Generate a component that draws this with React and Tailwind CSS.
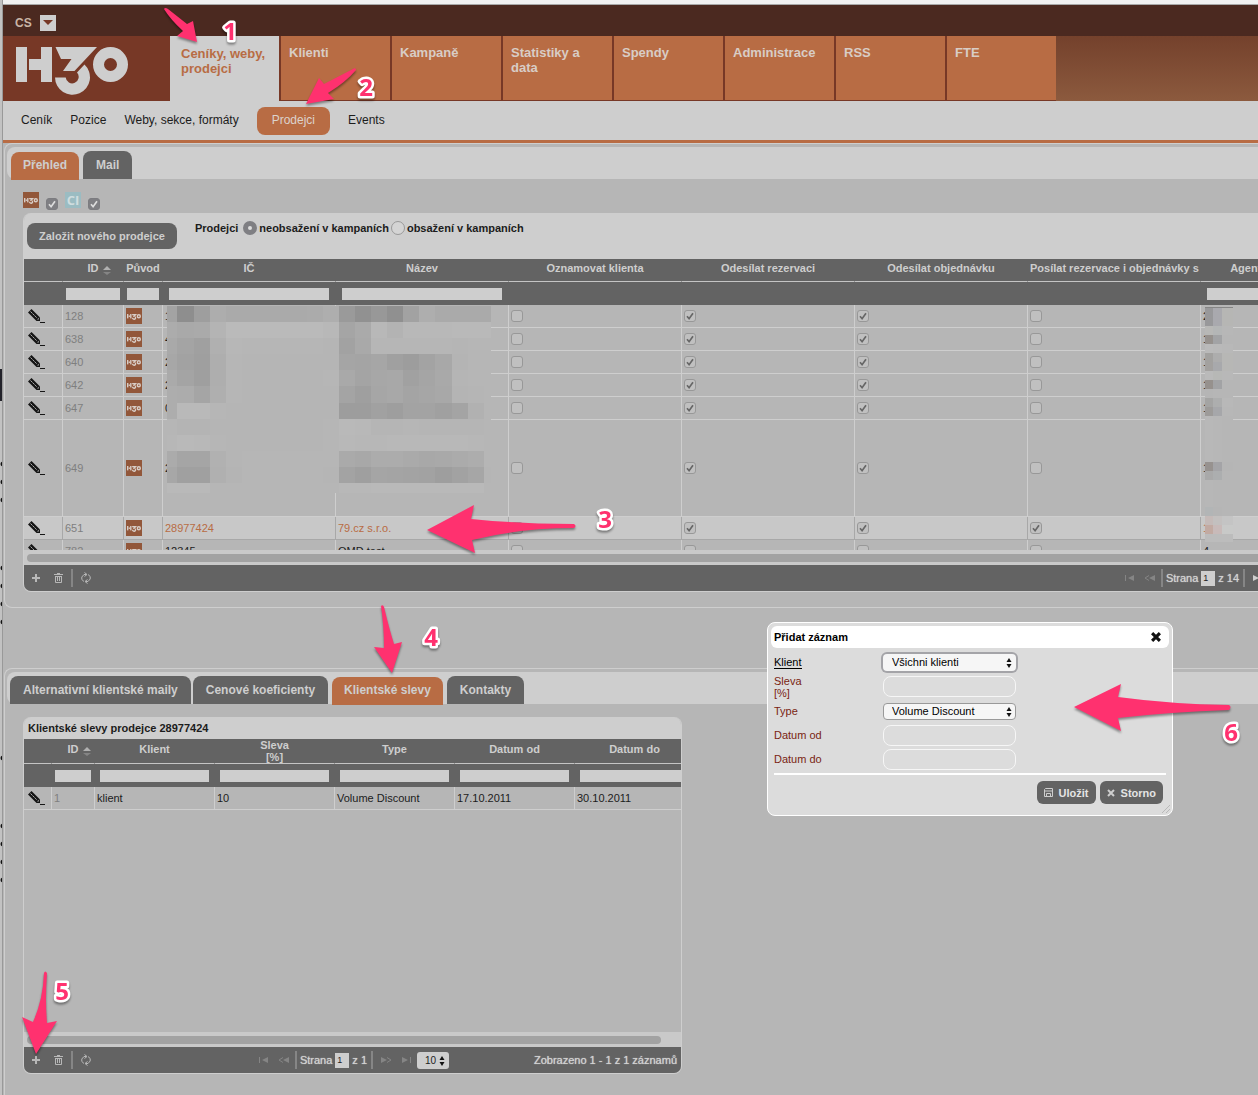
import React, { useState } from 'react';

const mainTabs = ['Klienti', 'Kampaně', 'Statistiky a data', 'Spendy', 'Administrace', 'RSS', 'FTE'];

const sellerColumns = [
  { label: '', width: 39 },
  { label: 'ID', width: 61, sorted: true, filter: 'px-[3px]' },
  { label: 'Původ', width: 39, filter: 'px-[3px]' },
  { label: 'IČ', width: 173, filter: 'px-1.5' },
  { label: 'Název', width: 173, filter: 'px-1.5' },
  { label: 'Oznamovat klienta', width: 173 },
  { label: 'Odesílat rezervaci', width: 173 },
  { label: 'Odesílat objednávku', width: 173 },
  { label: 'Posílat rezervace i objednávky s', width: 173 },
  { label: 'Agenturní provize [%]', width: 173, filter: 'px-1.5' },
  { label: '', width: 1046 },
];

const sellers = [
  { id: 128, ic: '1', name: '', flags: [false, true, true, false], fee: '2' },
  { id: 638, ic: '4', name: '', flags: [false, true, true, false], fee: '1' },
  { id: 640, ic: '2', name: '', flags: [false, true, true, false], fee: '1' },
  { id: 642, ic: '2', name: '', flags: [false, true, true, false], fee: '1' },
  { id: 647, ic: '0', name: '', flags: [false, true, true, false], fee: '1' },
  { id: 649, ic: '2', name: '', flags: [false, true, true, false], fee: '1', tall: true },
  { id: 651, ic: '28977424', name: '79.cz s.r.o.', flags: [false, true, true, true], fee: '1', selected: true },
  { id: 782, ic: '12345', name: 'OMD test', flags: [false, false, false, false], fee: '4' },
];

const discountColumns = [
  { label: '', width: 28 },
  { label: 'ID', width: 43, sorted: true, filter: 'px-[3px]' },
  { label: 'Klient', width: 120, filter: 'px-[5px]' },
  { label: 'Sleva [%]', width: 120, filter: 'px-[5px]', wrap: true },
  { label: 'Type', width: 120, filter: 'px-[5px]' },
  { label: 'Datum od', width: 120, filter: 'px-[5px]' },
  { label: 'Datum do', width: 120, filter: 'px-[5px]' },
];

// Anonymised values, one gray level per block
const maskX = [0, 10, 27, 43, 59, 75, 91, 107, 123, 140, 156, 172, 188, 204, 220, 236, 252, 268, 285, 301, 317, 324];
const maskY = [0, 16, 32, 48, 64, 80, 97, 113, 129, 145, 161, 177, 187];
const maskRows = [
  'a3 8e 9e ad aa aa aa aa aa ab ae 9a 91 98 90 a2 ae aa aa aa aa',
  'ac a9 aa b4 ba ba ba ba ba ba b8 a5 aa b8 b3 b8 b8 b8 b9 b9 b9',
  'a9 a4 a0 b0 b7 b6 b6 b6 b6 b6 b5 a2 a9 b6 b6 b6 b6 b6 b5 b6 b6',
  'a7 a2 9f ae b6 b5 b5 b5 b5 b5 b5 a5 a4 a6 a0 9d a3 a8 b4 b6 b6',
  'aa a4 9f ae b6 b5 b5 b5 b5 b5 b6 a9 a4 a7 a8 a1 a5 a9 b5 b6 b6',
  'ad ac a5 af b6 b5 b5 b5 b5 b5 b5 a4 9f a6 a8 a4 a6 a8 b4 b5 b6',
  'ad b9 b9 b6 b5 b5 b5 b5 b5 b5 b5 9d 9d a1 9e a3 a3 a0 a4 b1 b6',
  'b6 b4 b4 b5 b5 b5 b5 b5 b5 b5 b6 b9 b8 b5 b5 b6 b5 b5 b5 b5 b6',
  'b7 b9 b8 b6 b5 b5 b5 b5 b5 b5 b6 b8 b7 b7 b8 b8 b8 b8 b8 b7 b6',
  'ab a5 a5 b1 b5 b6 b6 b6 b6 b6 b6 aa a8 ac ac aa a8 a9 ab ad b6',
  'a7 a0 a0 b0 b4 b6 b6 b6 b6 b6 b5 a3 9f a5 a4 a3 a2 9e a2 a6 b5',
  'b9 b9 b9 b6 b6 b6 b6 b6 b6 b6 b6 b8 b8 b9 b9 b9 b9 b9 b9 b9 b6',
];

const feeBlocks = [
  [0, 19, '#98989a', '#a9a9ae', '#b6b6b4'],
  [19, 9, '#b8b8b6', '#b4b6b6', '#b7b7b7'],
  [28, 9, '#96918d', '#a2a3a5', '#b6b6b6'],
  [37, 9, '#bababa', '#b9b9b9', '#b8b8b8'],
  [46, 9, '#a2a19f', '#adadad', '#b7b7b5'],
  [55, 9, '#a3a19f', '#a8a9ac', '#b7b7b5'],
  [64, 9, '#bababa', '#b7b8b6', '#b8b8b8'],
  [73, 9, '#96918d', '#a2a3a5', '#b6b6b6'],
  [82, 9, '#b5b5b5', '#b6b6b6', '#b6b6b6'],
  [91, 9, '#a4a4a3', '#adaeae', '#b8b8b8'],
  [100, 9, '#9d9b99', '#a6a7aa', '#b7b7b7'],
  [109, 46, '#b8b8b8', '#b7b7b7', '#b6b6b6'],
  [155, 9, '#97928f', '#a4a4a7', '#b5b5b5'],
  [164, 9, '#a9a9a9', '#acaeaf', '#b6b6b6'],
  [173, 27, '#b7b7b7', '#b6b6b6', '#b6b6b6'],
  [200, 9, '#b2b5b6', '#b5b5b5', '#b6b6b6'],
  [209, 9, '#c5bab8', '#c3c0bf', '#c4c4c4'],
  [218, 9, '#c2aaa2', '#c8bab9', '#c8c9c8'],
  [227, 8, '#bcbcbc', '#bcbcbc', '#bcbcbc'],
];

const H3OMark = ({ className }) => (
  <svg viewBox="0 0 112 48" fill="none" className={className} aria-label="H3O" role="img">
    <g fill="currentColor">
      <rect x="0" y="0" width="11" height="35" />
      <rect x="13" y="12" width="13" height="11" />
      <rect x="25" y="0" width="11" height="35" />
      <path d="M39.500 0H81L58.500 24L47 24L55.500 12H45Z" />
      <path d="M39 30.500A17.500 17.500 0 1 0 68.500 17.500L61 25.500A6.500 6.500 0 1 1 49.700 30.500Z" />
      <path fillRule="evenodd" d="M94.500 0a17.500 17.500 0 1 0 0 35a17.500 17.500 0 1 0 0-35ZM94.500 11a6.500 6.500 0 1 1 0 13a6.500 6.500 0 1 1 0-13Z" />
    </g>
  </svg>
);

const H3OBadge = () => (
  <span className="flex h-4 w-4 items-center justify-center bg-[#92573a] text-[#d8cdc6]">
    <H3OMark className="mt-px w-3.5" />
  </span>
);

const Pencil = () => (
  <svg width="17" height="14" viewBox="0 0 17 14">
    <path d="M3.500 0L12 8.500V12H8.500L0 3.500Z" fill="#161616" />
    <path d="M2.500 2.500L9 9" stroke="#b6b6b6" strokeWidth="1" strokeDasharray="2 0.800" />
    <path d="M9 10.500L10.800 8.700V10.500Z" fill="#b6b6b6" />
    <rect x="12" y="13" width="5" height="1" fill="#161616" />
  </svg>
);

const Tick = ({ label, checked, strong }) => (
  <span className="relative block h-3 w-3">
    <input
      type="checkbox"
      aria-label={label}
      defaultChecked={checked}
      className={`block h-3 w-3 appearance-none rounded-[3px] border ${strong ? 'border-[#7c7c80] bg-[#7f7f83]' : 'border-[#989898] bg-[#c0c0c0]'}`}
    />
    {checked && (
      <svg viewBox="0 0 12 12" className={`pointer-events-none absolute inset-0 ${strong ? 'text-[#dedede]' : 'text-[#666666]'}`}>
        <path d="M3 6.200L5.100 8.700L9 3.300" fill="none" stroke="currentColor" strokeWidth="1.700" />
      </svg>
    )}
  </span>
);

const SortIcon = () => (
  <svg width="8" height="10" viewBox="0 0 8 10" className="absolute left-full top-1 ml-1">
    <path d="M0 4L4 0L8 4Z" fill="#b0b0b0" />
    <path d="M0 6H8L4 9Z" fill="#858585" />
  </svg>
);

const Stepper = ({ className }) => (
  <svg width="6" height="10" viewBox="0 0 6 10" className={`pointer-events-none absolute ${className}`}>
    <path d="M0.500 4L3 0L5.500 4ZM0.500 6H5.500L3 10Z" fill="#111111" />
  </svg>
);

const GridHead = ({ columns, rowHeight }) => (
  <>
    <colgroup>
      {columns.map((col, i) => (
        <col key={i} style={{ width: col.width }} />
      ))}
    </colgroup>
    <thead className="bg-[#636363] text-[#cecece]">
      <tr className={rowHeight}>
        {columns.map((col, i) => (
          <th key={i} scope="col" className={`overflow-hidden border-b border-r border-b-[#c4c4c4] border-r-[#636363] px-0.5 text-center font-bold leading-3 ${col.wrap ? 'px-10' : 'pb-1 whitespace-nowrap'}`}>
            {col.sorted ? (
              <span className="relative inline-block">{col.label}<SortIcon /></span>
            ) : (
              col.label
            )}
          </th>
        ))}
      </tr>
      <tr className="h-[23px]">
        {columns.map((col, i) => (
          <td key={i} className={`border-r border-[#636363] align-middle ${col.filter || ''}`}>
            {col.filter && <input type="text" aria-label={`Filtr ${col.label}`} className="block h-3 w-full bg-[#cecece] px-0.5" />}
          </td>
        ))}
      </tr>
    </thead>
  </>
);

const GridScroll = () => (
  <div className="bg-[#c9c9c9] pb-[3px] pt-1">
    <div className="ml-[3px] mr-5 h-2 rounded-full bg-[#a2a2a2]"></div>
  </div>
);

const Divider = () => <span className="h-[18px] w-0.5 bg-[#868686]"></span>;

const GridFooter = ({ pages, summary }) => (
  <div className="grid h-[26px] grid-cols-[1fr_auto_1fr] items-center bg-[#636363] text-[#d2d2d2]">
    <div className="flex items-center pl-2 text-[#b8b8b8]">
      <button type="button" aria-label="Přidat">
        <svg width="8" height="8" viewBox="0 0 8 8"><path d="M3 0H5V3H8V5H5V8H3V5H0V3H3Z" fill="currentColor" /></svg>
      </button>
      <button type="button" aria-label="Smazat" className="ml-3.5 mr-2">
        <svg width="9" height="10" viewBox="0 0 9 10" fill="none" stroke="currentColor">
          <path d="M0 1.500H9M3 0.500H6M1.500 3V9.500H7.500V3M1 3.500H8M3.500 4V8M5.500 4V8" />
        </svg>
      </button>
      <Divider />
      <button type="button" aria-label="Obnovit" className="ml-2">
        <svg width="10" height="12" viewBox="0 0 10 12" fill="none" stroke="currentColor">
          <path d="M5.500 2.500H3L0.800 5V7.500L3 9.500M3.500 0.500L6 2.500L3.500 4.500M4.500 9.500H7L9.200 7V4.500L7 2.500M6.500 7.500L4 9.500L6.500 11.500" />
        </svg>
      </button>
    </div>
    <div className="flex items-center pl-[3px] text-[#858585]">
      <button type="button" aria-label="První strana">
        <svg width="9" height="6" viewBox="0 0 9 6" fill="currentColor"><path d="M0 0H1V6H0ZM9 0V6L3 3Z" /></svg>
      </button>
      <button type="button" aria-label="Předchozí strana" className="ml-2.5 mr-1.5">
        <svg width="11" height="6" viewBox="0 0 11 6"><path d="M11 0V6L5 3Z" fill="currentColor" /><path d="M5 0.500L1 3L5 5.500" fill="none" stroke="currentColor" /></svg>
      </button>
      <Divider />
      <label className="flex items-center gap-[3px] pl-[3px] pr-1 text-[#d2d2d2]">
        <span className="[text-shadow:0_0_1px_#cecece]">Strana</span>
        <input type="text" defaultValue="1" className="h-[15px] w-3.5 bg-[#cecece] px-0.5 text-[9px] text-[#222222]" />
        <span className="[text-shadow:0_0_1px_#cecece]">z {pages}</span>
      </label>
      <Divider />
      <button type="button" aria-label="Další strana" className={`ml-2 mr-2.5 ${pages > 1 ? 'text-[#cecece]' : ''}`}>
        <svg width="11" height="6" viewBox="0 0 11 6"><path d="M0 0V6L6 3Z" fill="currentColor" /><path d="M6 0.500L10 3L6 5.500" fill="none" stroke="currentColor" /></svg>
      </button>
      <button type="button" aria-label="Poslední strana">
        <svg width="9" height="6" viewBox="0 0 9 6" fill="currentColor"><path d="M8 0H9V6H8ZM0 0V6L6 3Z" /></svg>
      </button>
      <span className="relative ml-1.5">
        <select aria-label="Počet záznamů" className="block h-[17px] w-8 appearance-none rounded-[3px] bg-[#cecece] pl-2 text-[10px] leading-[17px] text-[#222222]">
          <option>10</option>
          <option>20</option>
        </select>
        <Stepper className="right-1 top-1" />
      </span>
    </div>
    <div className="pr-1 text-right [text-shadow:0_0_1px_#cecece]">{summary}</div>
  </div>
);

const Tab = ({ active, children }) => (
  <button
    type="button"
    className={`h-7 shrink-0 rounded-t-lg text-xs font-bold text-[#cecece] ${active ? 'relative top-px mx-0.5 bg-[#b86c44] px-3 pb-0.5' : 'bg-[#636363] px-[13px]'}`}
  >
    {children}
  </button>
);

const AddRecordDialog = ({ onClose }) => (
  <div role="dialog" aria-label="Přidat záznam" className="absolute left-[767px] top-[622px] w-[406px] rounded-lg border border-white bg-[#dcdcdc] p-[3px] text-[11px] text-[#7a2412]">
    <div className="flex h-[22px] items-center justify-between rounded-md bg-white pl-[3px] pr-2 text-black">
      <h2 className="font-bold">Přidat záznam</h2>
      <button type="button" aria-label="Zavřít" onClick={onClose}>
        <svg width="10" height="10" viewBox="0 0 9 9"><path d="M1 1L8 8M8 1L1 8" stroke="#111111" strokeWidth="2.800" /></svg>
      </button>
    </div>
    <form className="mx-0.5 px-px" onSubmit={(e) => e.preventDefault()}>
      <div className="grid grid-cols-[109px_133px] grid-rows-[24px_25px_24px_24px_24px] items-center pt-0.5 leading-3">
        <label htmlFor="klient"><span className="border-b border-black text-black">Klient</span></label>
        <span className="relative">
          <select id="klient" className="block h-[17px] w-full appearance-none rounded bg-[#f6f6f6] pl-[9px] leading-[17px] text-black ring-2 ring-[#a4a4a8]">
            <option>Všichni klienti</option>
          </select>
          <Stepper className="right-1 top-1" />
        </span>
        <label htmlFor="sleva" className="w-10">Sleva [%]</label>
        <input id="sleva" type="text" className="h-[21px] rounded-lg border border-[#f6f6f6] px-2" />
        <label htmlFor="type">Type</label>
        <span className="relative">
          <select id="type" className="block h-[17px] w-full appearance-none rounded border border-[#999999] bg-[#f6f6f6] pl-2 leading-[15px] text-black">
            <option>Volume Discount</option>
          </select>
          <Stepper className="right-1 top-1" />
        </span>
        <label htmlFor="od">Datum od</label>
        <input id="od" type="text" className="h-[21px] rounded-lg border border-[#f6f6f6] px-2" />
        <label htmlFor="do">Datum do</label>
        <input id="do" type="text" className="h-[21px] rounded-lg border border-[#f6f6f6] px-2" />
      </div>
      <div className="mt-0.5 flex justify-end gap-1 border-t-2 border-white pb-2 pr-[3px] pt-1.5 font-bold text-[#e4e4e4]">
        <button type="submit" className="flex h-[23px] items-center gap-1.5 rounded-md bg-[#636363] px-[7px]">
          <svg width="9" height="9" viewBox="0 0 9 9" fill="none" stroke="#cecece"><path d="M0.500 1.500L1.500 0.500H8.500V8.500H0.500ZM0.500 3H8.500M2.500 8V5.500H6.500V8" /></svg>
          Uložit
        </button>
        <button type="button" onClick={onClose} className="flex h-[23px] items-center gap-1.5 rounded-md bg-[#636363] px-[7px]">
          <svg width="8" height="8" viewBox="0 0 8 8"><path d="M1 1L7 7M7 1L1 7" stroke="#cecece" strokeWidth="2" /></svg>
          Storno
        </button>
      </div>
    </form>
    <svg width="8" height="8" viewBox="0 0 8 8" className="absolute bottom-0.5 right-0.5"><path d="M0 8L8 0M4 8L8 4" stroke="#b0b0b0" strokeWidth="0.800" /></svg>
  </div>
);

const steps = [
  { n: 1, x: 230, y: 40, d: 'M164 9Q165 7 168 9L187 24L193 21L197 42L177 36L183 31Q170 19 164 9Z' },
  { n: 2, x: 366, y: 96, d: 'M356 70Q356 67 353 69L324 84L319 78L306 104L334 99L328 93Q346 82 356 70Z' },
  { n: 3, x: 605, y: 528, d: 'M574 524Q577 526 574 528Q520 528 472 540L475 553L427 530L474 505L471 519Q520 524 574 524Z' },
  { n: 4, x: 431, y: 646, d: 'M381 606Q383 604 384 607Q389 628 394 644L402 642L392 673L374 647L384 648Q384 626 381 606Z' },
  { n: 5, x: 62, y: 1000, d: 'M44 973Q45 970 47 973Q45 1000 47 1023L57 1021L36 1054L22 1017L33 1022Q43 1000 44 973Z' },
  { n: 6, x: 1231, y: 741, d: 'M1229 705Q1232 707 1229 710Q1170 712 1118 718L1121 731L1074 707L1121 684L1118 697Q1170 704 1229 705Z' },
];

const Guide = () => (
  <svg width="1258" height="1095" viewBox="0 0 1258 1095" className="pointer-events-none absolute left-0 top-0">
    <g className="drop-shadow-[0_2px_1px_rgba(0,0,0,0.4)]" fill="#ff316f">
      {steps.map((step) => (
        <path key={step.n} d={step.d} />
      ))}
      {steps.map((step) => (
        <text key={step.n} x={step.x} y={step.y} textAnchor="middle" stroke="white" strokeWidth="5" strokeLinejoin="round" paintOrder="stroke" className="font-['Open_Sans',sans-serif] text-[24px] font-bold">
          {step.n}
        </text>
      ))}
    </g>
  </svg>
);

const bullets = [464, 482, 500, 568, 586, 604, 622, 758, 826, 844, 862, 880];

const App = () => {
  const [dialogOpen, setDialogOpen] = useState(true);

  return (
    <div className="relative flex min-h-screen overflow-hidden bg-[#b6b6b6] font-['Liberation_Sans',Arial,sans-serif] text-[11px] leading-4 text-[#1c1c1c]">
      {/* Edge of the window behind */}
      <div className="w-[3px] shrink-0 border-r border-[#999999] bg-[#c2c2c2]">
        <svg width="2" height="1095" viewBox="0 0 2 1095">
          <rect x="0" y="369" width="2" height="32" fill="#22222a" />
          {bullets.map((y) => (
            <circle key={y} cx="3" cy={y} r="2.500" fill="#111111" />
          ))}
        </svg>
      </div>

      <div className="flex min-w-0 flex-1 flex-col overflow-hidden">
        <header>
          <div className="h-[5px] border-b border-[#a8a8a8] bg-[#f1f1f1]"></div>
          <div className="flex h-[31px] items-center gap-2 bg-[#4b2920] pl-3 pt-1">
            <span className="text-xs font-bold text-[#c9b5a6]">CS</span>
            <button type="button" aria-label="Jazyk" className="flex h-4 w-4 items-center justify-center bg-[#cecece]">
              <svg width="10" height="5" viewBox="0 0 10 5"><path d="M0 0H10L5 5Z" fill="#773826" /></svg>
            </button>
          </div>
          <nav className="flex h-[65px] bg-gradient-to-b from-[#74412c] to-[#8c5a3e] text-[13px] font-bold leading-[15px]">
            <a href="#home" className="w-[167px] shrink-0 bg-[#773826] pl-[13px] pt-[11px] text-[#cecece]">
              <H3OMark className="w-28" />
            </a>
            <a href="#ceniky" className="w-[109px] shrink-0 bg-[#cecece] pl-[11px] pt-2.5 text-[#b86c44]">Ceníky, weby, prodejci</a>
            {mainTabs.map((tab) => (
              <a key={tab} href={`#${tab}`} className="w-[111px] shrink-0 border-b border-l-2 border-[#773826] bg-[#b86c44] pl-2 pr-4 pt-[9px] text-[#d8cdc6]">{tab}</a>
            ))}
          </nav>
          <nav className="flex h-[42px] items-center gap-[18px] border-b-[3px] border-[#b86c44] bg-[#cecece] pl-[18px] text-xs">
            <a href="#cenik" className="pb-0.5">Ceník</a>
            <a href="#pozice" className="pb-0.5">Pozice</a>
            <a href="#weby" className="pb-0.5">Weby, sekce, formáty</a>
            <a href="#prodejci" className="rounded-lg bg-[#b86c44] px-[15px] pb-[7px] pt-[5px] text-[#dcd3cd]">Prodejci</a>
            <a href="#events" className="pb-0.5">Events</a>
          </nav>
        </header>

        <main className="flex flex-1 flex-col pl-px">
          <section className="h-[465px] rounded-l-lg border-y border-l border-[#cecece]">
            <div className="ml-0.5 mt-[3px] flex h-8 items-end gap-0.5 rounded-l-lg bg-[#cecece] pl-0.5">
              <Tab active>Přehled</Tab>
              <Tab>Mail</Tab>
            </div>
            <div className="flex items-start gap-[7px] pl-[18px] pt-[13px]">
              <H3OBadge />
              <span className="pt-1.5"><Tick strong checked label="H3O" /></span>
              <span className="flex h-4 w-4 items-center justify-center bg-[#9bbcc2] font-['Open_Sans',sans-serif] text-[13px] font-bold text-[#cfdddf]">CI</span>
              <span className="pt-1.5"><Tick strong checked label="CI" /></span>
            </div>

            <div className="ml-[18px] mt-[3px] w-[2397px] overflow-hidden rounded-lg border border-t-0 border-[#cecece]">
              <div className="flex h-[46px] items-start bg-[#cecece] pl-[3px]">
                <button type="button" className="mt-2.5 h-[26px] rounded-lg bg-[#636363] px-3 font-bold text-[#cecece]">Založit nového prodejce</button>
                <fieldset className="ml-[18px] mt-[7px] flex items-center font-bold">
                  <span className="mr-[5px]">Prodejci</span>
                  <label className="flex items-center gap-0.5">
                    <input type="radio" name="obsazeni" defaultChecked className="h-3.5 w-3.5 appearance-none rounded-full border-[5px] border-[#7f7f83] bg-[#dedede]" />
                    neobsažení v kampaních
                  </label>
                  <label className="ml-0.5 flex items-center gap-0.5">
                    <input type="radio" name="obsazeni" className="h-3.5 w-3.5 appearance-none rounded-full border border-[#999999] bg-[#d4d4d4]" />
                    obsažení v kampaních
                  </label>
                </fieldset>
              </div>

              <div className="relative h-[291px] overflow-hidden">
                <table className="w-full table-fixed border-separate border-spacing-0">
                  <GridHead columns={sellerColumns} rowHeight="h-[23px]" />
                  <tbody>
                    {sellers.map((row) => (
                      <tr
                        key={row.id}
                        className={`${row.tall ? 'h-[97px]' : 'h-[23px]'} ${row.selected ? 'bg-[#c8c8c8] text-[#b86c44] *:border-[#a8a8a8]' : '*:border-[#cecece]'} *:border-b *:border-r`}
                      >
                        <td className="pl-1"><Pencil /></td>
                        <td className="pl-0.5 text-[#7f7f7f]">{row.id}</td>
                        <td className="pl-0.5"><H3OBadge /></td>
                        <td className="pl-0.5">{row.ic}</td>
                        <td className="pl-0.5">{row.name}</td>
                        {row.flags.map((on, i) => (
                          <td key={i} className="pl-0.5"><Tick checked={on} label={`${sellerColumns[i + 5].label} ${row.id}`} /></td>
                        ))}
                        <td className="pl-0.5">{row.fee}</td>
                        <td></td>
                      </tr>
                    ))}
                  </tbody>
                </table>
                <svg width="324" height="187" viewBox="0 0 324 187" shapeRendering="crispEdges" className="absolute left-[143px] top-[47px]">
                  {maskRows.map((row, r) =>
                    row.split(' ').map((level, c) => (
                      <rect key={`${r}-${c}`} x={maskX[c]} y={maskY[r]} width={maskX[c + 1] - maskX[c]} height={maskY[r + 1] - maskY[r]} fill={`#${level}${level}${level}`} />
                    ))
                  )}
                </svg>
                <svg width="28" height="235" viewBox="0 0 28 235" shapeRendering="crispEdges" className="absolute left-[1181px] top-12">
                  {feeBlocks.map(([y, h, a, b, c]) => (
                    <g key={y}>
                      <rect x="0" y={y} width="8" height={h} fill={a} />
                      <rect x="8" y={y} width="9" height={h} fill={b} />
                      <rect x="17" y={y} width="11" height={h} fill={c} />
                    </g>
                  ))}
                  <rect x="0" y="0" width="28" height="1" fill="#858585" />
                </svg>
              </div>
              <GridScroll />
              <GridFooter pages={14} summary="Zobrazeno 1 - 10 z 134 záznamů" />
            </div>
          </section>

          <section className="mt-[60px] flex-1 rounded-tl-lg border-l border-t border-[#cecece]">
            <div className="ml-0.5 mt-[3px] flex h-8 items-end gap-0.5 rounded-l-lg bg-[#cecece] pl-[3px]">
              <Tab>Alternativní klientské maily</Tab>
              <Tab>Cenové koeficienty</Tab>
              <Tab active>Klientské slevy</Tab>
              <Tab>Kontakty</Tab>
            </div>

            <div className="ml-[18px] mt-[13px] w-[659px] overflow-hidden rounded-lg border border-t-0 border-[#cecece]">
              <h2 className="h-[22px] bg-[#cecece] pl-1 font-bold leading-[22px]">Klientské slevy prodejce 28977424</h2>
              <div className="h-[293px] overflow-hidden">
                <table className="w-[671px] table-fixed border-separate border-spacing-0">
                  <GridHead columns={discountColumns} rowHeight="h-[25px]" />
                  <tbody>
                    <tr className="h-[23px] *:border-b *:border-r *:border-[#cecece]">
                      <td className="pl-1"><Pencil /></td>
                      <td className="pl-0.5 text-[#7f7f7f]">1</td>
                      <td className="pl-0.5">klient</td>
                      <td className="pl-0.5">10</td>
                      <td className="pl-0.5">Volume Discount</td>
                      <td className="pl-0.5">17.10.2011</td>
                      <td className="pl-0.5">30.10.2011</td>
                    </tr>
                  </tbody>
                </table>
              </div>
              <GridScroll />
              <GridFooter pages={1} summary="Zobrazeno 1 - 1 z 1 záznamů" />
            </div>
          </section>
        </main>
      </div>

      {dialogOpen && <AddRecordDialog onClose={() => setDialogOpen(false)} />}
      <Guide />
    </div>
  );
};

export default App;
